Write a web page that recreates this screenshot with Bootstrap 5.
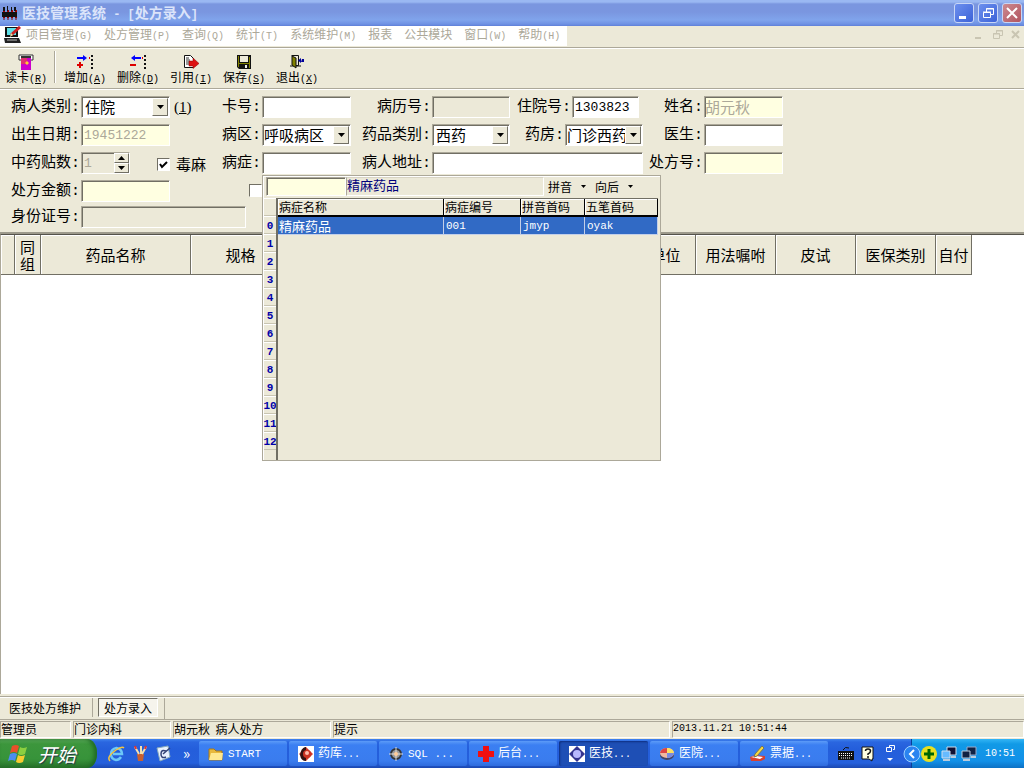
<!DOCTYPE html>
<html lang="zh-CN">
<head>
<meta charset="utf-8">
<meta name="viewport" content="width=device-width, initial-scale=1">
<title>医技管理系统 - [处方录入]</title>
<link href="https://cdn.jsdelivr.net/npm/bootstrap@5.3.0/dist/css/bootstrap.min.css" rel="stylesheet">
<style>
:root{--face:#ece9d8;--shade:#aca899;--dark:#716f64;--cream:#ffffe1;--cjk:"Noto Sans CJK SC",sans-serif}
body{font-family:var(--cjk);font-size:12px;line-height:16px;color:#000;background:var(--face);overflow:hidden}
button{font:inherit;color:inherit;padding:0;border:0;background:none}
a{color:inherit;text-decoration:none}
svg{display:block;flex:none}
.lat{font-family:"Liberation Mono",monospace;font-size:10px}
.lat-md{font-family:"Liberation Mono",monospace;font-size:11px}
/* title bar */
.titlebar{height:26px;padding:0 2px;background:linear-gradient(#9ab8f2 0,#9ab8f2 2px,#7a96df 4px,#7a96e0 12px,#80a4ec 20px,#6f92e4 24px,#5f7fd8 26px);color:#dbe4fa}
.titlebar h1{font-size:14px;line-height:24px;font-weight:700}
.titlebar h1 .lat-t{font-family:"Liberation Mono",monospace;font-size:12px}
.winbtn{width:20px;height:20px;border:1px solid #c8d6f6;border-radius:3px;background:linear-gradient(135deg,#6d90ee,#3c62d8)}
.winbtn-x{background:linear-gradient(135deg,#cc8a90,#b25560)}
/* menu */
.menubar{height:20px;color:#aca899}
.menubar nav{background:#fff;padding:0 7px 0 4px;gap:12px}
.menubar nav a{line-height:16px}
.tool{height:42px;border-top:1px solid var(--shade);border-bottom:1px solid var(--shade);box-shadow:inset 0 1px #fff,0 1px #fff;margin-top:1px;padding:4px 4px 0 5px;gap:11px}
.tool button{width:42px;line-height:14px;text-align:center;white-space:nowrap}
.tool button svg{margin:0 auto}
.tool .sep{width:2px;height:32px;border-left:1px solid var(--shade);border-right:1px solid #fff;margin:-1px -3px 0 -4px}
/* form */
.rx-form{display:grid;grid-template-columns:81px 89px 92px 89px 81px 78px 133px 61px 79px;grid-template-rows:28px 28px 28px 26px 25px;padding:6px 0 1px;border-bottom:2px solid #9d9a8c;align-items:start;font-size:15px;line-height:22px;margin-top:1px}
.rx-form .lb{font-family:"Liberation Mono","Noto Sans CJK SC",sans-serif;font-size:15px;line-height:24px;text-align:right;padding-right:1px;white-space:nowrap}
.inp{display:block;height:22px;width:100%;min-width:0;border:1px solid;border-color:var(--shade) #fff #fff var(--shade);box-shadow:inset 1px 1px var(--dark);background:#fff;border-radius:0;padding:0 0 0 2px;font-family:"Liberation Mono","Noto Sans CJK SC",sans-serif;font-size:13px;line-height:18px;outline:0;color:#000}
.inp.cr{background:var(--cream)} .inp.gy{background:var(--face)}
.inp:disabled{color:#aca899;opacity:1}
.inp.han{font-size:15px;padding-left:0}
.combo{height:22px;display:flex;border:1px solid;border-color:var(--shade) #fff #fff var(--shade);box-shadow:inset 1px 1px var(--dark);background:#fff;padding:1px}
.combo select{appearance:none;flex:1;min-width:0;border:0;background:transparent;padding:0 0 0 2px;font:15px/18px var(--cjk);outline:0;color:#000;overflow:hidden}
.raised{background:var(--face);border:1px solid;border-color:#fff var(--dark) var(--dark) #fff;display:flex;align-items:center;justify-content:center}
.combo .raised{width:16px;pointer-events:none}
.spin{width:17px;padding:1px}
.chk{appearance:none;width:13px;height:13px;background:#fff;border:1px solid;border-color:var(--dark) #fff #fff var(--dark);margin:0;display:block;flex:none}
.tick{pointer-events:none;margin-left:-11px}
/* lookup */
.lookup{position:absolute;left:0;top:23px;z-index:5;width:399px;background:var(--face);border:1px solid var(--shade);box-shadow:inset 1px 1px #fff;font-size:12px;line-height:16px;padding:1px 2px 0 1px}
.lookup .find{width:80px;height:19px;background:var(--cream);margin-left:2px}
.lookup .hit{width:198px;height:19px;border:1px solid;border-color:#d8d4c4 #fff #fff var(--shade);color:#00007b;font-size:13px;line-height:13px}
.nums{width:12px;color:#0000a8;font-weight:700}
.nums div{height:18px;border-bottom:1px solid #c9c5b2;box-shadow:inset 0 1px #fff;line-height:20px;display:flex;justify-content:center}
.hits{height:262px;flex:1;border-left:2px solid var(--dark);border-top:1px solid var(--dark)}
.hits table{table-layout:fixed;width:100%;border-collapse:separate;border-spacing:0}
.hits th{font-weight:400;height:18px;line-height:16px;padding:0 0 0 1px;border-right:1px solid #000;border-bottom:2px solid #000;box-shadow:inset 1px 1px #fff;white-space:nowrap}
.hits td{background:#316ac5;color:#fff;height:18px;line-height:16px;padding:0 0 0 2px;border-right:1px solid #c3cfe8;border-bottom:1px solid #c3cfe8}
.hits td:first-child{font-size:13px;padding-left:1px}
/* drug table */
.sheet{background:#fff;border-left:1px solid var(--shade);border-top:1px solid #55534b;min-height:0}
.sheet table{table-layout:fixed;border-collapse:separate;border-spacing:0;width:971px}
.sheet th{height:40px;background:var(--face);border-right:1px solid var(--dark);border-bottom:1px solid var(--dark);box-shadow:inset 1px 1px #fff;font-size:15px;line-height:17px;font-weight:400;text-align:center;padding:0;white-space:nowrap}
/* window tabs + status */
.wtabs{height:24px;border-top:1px solid var(--shade);border-bottom:1px solid var(--shade);box-shadow:inset 0 1px #fff;margin-top:2px;padding:1px 3px 0}
.wtabs button{height:19px;line-height:16px;padding:0 11px 0 6px;border-right:1px solid var(--shade)}
.wtabs .on{border:1px solid;border-color:var(--dark) #fff #fff var(--dark);background:#f6f4ec;padding:0 5px;margin-left:5px}
.wtabs .edge{width:7px;border-right:1px solid var(--shade)}
.stat{height:19px;gap:2px;padding:1px 0}
.stat div{border:1px solid;border-color:var(--shade) #fff #fff var(--shade);line-height:13px;white-space:nowrap}
/* taskbar */
.taskbar{height:29px;background:linear-gradient(#3f83ee 0,#2a66e0 3px,#245edb 10px,#2560dc 24px,#1c48b0 29px);color:#fff}
.start{width:97px;height:29px;background:linear-gradient(#5fae5e 0,#3c963c 5px,#37933a 20px,#27712a 29px);border-radius:0 10px 10px 0/0 14px 14px 0;box-shadow:inset -3px 0 4px #1f6a24;font-size:19px;font-style:italic;line-height:26px;text-shadow:1px 1px 1px #234}
.task{flex:1 1 0;min-width:0;height:25px;border-radius:2px;background:linear-gradient(#5c9bf8,#3b7ff2 4px,#3a7cee 20px,#2f6bdd);padding-left:9px;gap:4px;text-align:left;white-space:nowrap}
.task.on{background:#1e4fb5;box-shadow:inset 1px 1px 2px #0e2f80}
.tray{width:113px;background:linear-gradient(#33b5f5 0,#119ae6 5px,#1290e8 22px,#0d71c4 29px);border-left:1px solid #0a3f97}
</style>
</head>
<body class="vh-100 d-flex flex-column">

<header class="titlebar d-flex align-items-center">
  <svg width="16" height="16" viewBox="0 0 16 16"><path d="M1 5h2v8H1zM5 5h2v8H5zM9 5h2v8H9zM13 5h2v8h-2z" fill="#a00"/><path d="M0 7h4v5H0zM4 7h4v5H4zM8 7h4v5H8zM12 7h3v5h-3z" fill="#111"/><path d="M1 2h2v4H1zM5 1h1v5H5zM9 2h1v4H9zM12 2h2v4h-2z" fill="#111"/><path d="M2 12v3M6 12v3M10 12v3M14 12v3" stroke="#700"/></svg>
  <h1 class="m-0 ms-1">医技管理系统<span class="lat-t"> - [</span>处方录入<span class="lat-t">]</span></h1>
  <div class="ms-auto d-flex gap-1">
    <button class="winbtn" aria-label="最小化"><svg width="18" height="18"><path d="M4 12h7v3H4z" fill="#fff"/></svg></button>
    <button class="winbtn" aria-label="还原"><svg width="18" height="18" fill="none" stroke="#fff"><path d="M7.500 8V4.500h7v6H12M7 5h8M4 8h8"/><path d="M4.500 8.500h7v5h-7z"/></svg></button>
    <button class="winbtn winbtn-x" aria-label="关闭"><svg width="18" height="18"><path d="M4 4l10 10M14 4L4 14" stroke="#fff" stroke-width="2"/></svg></button>
  </div>
</header>

<div class="menubar d-flex">
  <nav class="d-flex">
    <svg width="18" height="18" viewBox="0 0 18 18" style="margin-right:-8px"><path d="M1 1h13v10H1z" fill="#111"/><path d="M3 2h9v7H3z" fill="#5de0e8"/><path d="M0 12h15l2 5H1z" fill="#222"/><path d="M3 14h10" stroke="#bbb"/><path d="M16 1L7 9" stroke="#c22" stroke-width="3"/><path d="M7 7l-1 4 3-2" fill="#e8e0a0"/></svg>
    <a href="#">项目管理<span class="lat">(G)</span></a>
    <a href="#">处方管理<span class="lat">(P)</span></a>
    <a href="#">查询<span class="lat">(Q)</span></a>
    <a href="#">统计<span class="lat">(T)</span></a>
    <a href="#">系统维护<span class="lat">(M)</span></a>
    <a href="#">报表</a>
    <a href="#">公共模块</a>
    <a href="#">窗口<span class="lat">(W)</span></a>
    <a href="#">帮助<span class="lat">(H)</span></a>
  </nav>
  <svg class="ms-auto me-1" width="48" height="18" fill="none" stroke="#c9c5b2"><path d="M3 12h6" stroke-width="2"/><path d="M24.500 7V4.500h6v5H28M21.500 7.500h6v5h-6zM21 8h7M24 5h7"/><path d="M40 5l7 7M47 5l-7 7" stroke-width="2"/></svg>
</div>

<div class="tool d-flex" role="toolbar">
  <button><svg width="16" height="16" viewBox="0 0 16 16"><path d="M1 1h14v5H1z" fill="#fff" stroke="#333"/><path d="M3 3h10" stroke="#333" stroke-width="2"/><path d="M3 4h10v12H3z" fill="#c0c"/><path d="M3 4h6v6H3z" fill="#e03070"/><path d="M9 7l2 2-2 2-2-2z" fill="#fc3"/></svg>读卡<span class="lat">(<u>R</u>)</span></button>
  <span class="sep"></span>
  <button><svg width="16" height="16" viewBox="0 0 16 16"><path d="M0 4h7" stroke="#00f" stroke-width="2"/><path d="M6 1l4 3-4 3z" fill="#00f"/><path d="M3 8v6M0 11h6" stroke="#d00" stroke-width="2"/><path d="M15 1v14" stroke="#111" stroke-width="2" stroke-dasharray="2 2"/><path d="M12 4h1" stroke="#d00" stroke-width="2"/></svg>增加<span class="lat">(<u>A</u>)</span></button>
  <button><svg width="16" height="16" viewBox="0 0 16 16"><path d="M3 4h8" stroke="#00f" stroke-width="2"/><path d="M5 1v6L1 4z" fill="#00f"/><path d="M0 11h6" stroke="#d00" stroke-width="2"/><path d="M15 1v14" stroke="#111" stroke-width="2" stroke-dasharray="2 2"/><path d="M12 4h1" stroke="#d00" stroke-width="2"/></svg>删除<span class="lat">(<u>D</u>)</span></button>
  <button><svg width="16" height="16" viewBox="0 0 16 16"><path d="M1.500 1.500h6l3 3v9h-9z" fill="#fff" stroke="#111"/><path d="M3 4h3M3 6h4M3 8h3M3 10h3" stroke="#333"/><path d="M6 7h4V4l6 5.500-6 5V12H6z" fill="#d11" stroke="#800" stroke-width=".5"/></svg>引用<span class="lat">(<u>I</u>)</span></button>
  <button><svg width="16" height="16" viewBox="0 0 16 16"><path d="M1 1h14v14H3l-2-2z" fill="#111"/><path d="M2 2h1v11H2zM13 3h1v11h-1zM3 9h10v1H3z" fill="#808000"/><path d="M4 2h8v6H4z" fill="#ece9d8"/><path d="M9 11h2v3H9z" fill="#eee"/></svg>保存<span class="lat">(<u>S</u>)</span></button>
  <button><svg width="16" height="16" viewBox="0 0 16 16"><path d="M2.500 1.500h7v10h-3M1 12h11" fill="none" stroke="#111"/><path d="M3 2l4 2v10l-4-3z" fill="#808000" stroke="#111"/><path d="M12 4v5L9 6.500z" fill="#009"/><path d="M13 5h2v3h-3z" fill="#009"/></svg>退出<span class="lat">(<u>X</u>)</span></button>
</div>

<form class="rx-form">
  <label class="lb" for="kind">病人类别:</label>
  <div class="combo"><select id="kind"><option>住院</option></select><span class="raised"><svg width="7" height="4"><path d="M0 0h7L3.500 4z"/></svg></span></div>
  <div class="d-flex"><span class="ps-1" style="font-family:'Liberation Serif',serif">(<u>1</u>)</span><label class="lb flex-grow-1" for="card">卡号:</label></div>
  <input class="inp" id="card">
  <label class="lb" for="hist">病历号:</label>
  <input class="inp gy" id="hist" disabled>
  <div class="d-flex"><label class="lb flex-grow-1" for="inno">住院号:</label><div style="width:71px" class="pe-1"><input class="inp" id="inno" value="1303823"></div></div>
  <label class="lb" for="pname">姓名:</label>
  <input class="inp cr han" id="pname" value="胡元秋" disabled>

  <label class="lb" for="birth">出生日期:</label>
  <input class="inp cr" id="birth" value="19451222" disabled>
  <label class="lb" for="ward">病区:</label>
  <div class="combo"><select id="ward" class="p-0"><option>呼吸病区</option></select><span class="raised"><svg width="7" height="4"><path d="M0 0h7L3.500 4z"/></svg></span></div>
  <label class="lb" for="dtype">药品类别:</label>
  <div class="combo"><select id="dtype"><option>西药</option></select><span class="raised"><svg width="7" height="4"><path d="M0 0h7L3.500 4z"/></svg></span></div>
  <div class="d-flex"><label class="lb flex-grow-1" for="pharm">药房:</label><div class="combo" style="width:78px"><select id="pharm" class="p-0"><option>门诊西药房</option></select><span class="raised"><svg width="7" height="4"><path d="M0 0h7L3.500 4z"/></svg></span></div></div>
  <label class="lb" for="doc">医生:</label>
  <input class="inp" id="doc">

  <label class="lb" for="doses">中药贴数:</label>
  <div class="position-relative" style="width:49px"><input class="inp gy" id="doses" value="1" disabled>
    <div class="spin position-absolute top-0 end-0 h-100 d-flex flex-column"><span class="raised flex-fill"><svg width="7" height="4"><path d="M0 4h7L3.500 0z"/></svg></span><span class="raised flex-fill"><svg width="7" height="4"><path d="M0 0h7L3.500 4z"/></svg></span></div></div>
  <div class="d-flex align-items-center" style="margin-left:-13px"><input type="checkbox" class="chk" id="nar" checked><svg class="tick" width="9" height="9"><path d="M1 4l2 3 5-5" fill="none" stroke="#000" stroke-width="2"/></svg><label for="nar" class="ps-2">毒麻</label><label class="lb flex-grow-1" for="dis">病症:</label></div>
  <div class="position-relative"><input class="inp" id="dis">
    <div class="lookup">
      <div class="d-flex align-items-start" style="height:21px">
        <input class="inp find" aria-label="检索" autofocus>
        <div class="hit">精麻药品</div>
        <button type="button" class="d-flex align-items-center ms-1" style="line-height:20px">拼音<svg class="ms-2 me-2" width="7" height="4"><path d="M1 0h5L3.500 3z"/></svg></button>
        <button type="button" class="d-flex align-items-center" style="line-height:20px">向后<svg class="ms-2" width="7" height="4"><path d="M1 0h5L3.500 3z"/></svg></button>
      </div>
      <div class="d-flex">
        <div class="nums lat-md"><div></div><div>0</div><div>1</div><div>2</div><div>3</div><div>4</div><div>5</div><div>6</div><div>7</div><div>8</div><div>9</div><div>10</div><div>11</div><div>12</div></div>
        <div class="hits"><table>
          <colgroup><col><col style="width:77px"><col style="width:64px"><col style="width:73px"></colgroup>
          <thead><tr><th>病症名称</th><th>病症编号</th><th>拼音首码</th><th>五笔首码</th></tr></thead>
          <tbody><tr><td>精麻药品</td><td class="lat-md">001</td><td class="lat-md">jmyp</td><td class="lat-md">oyak</td></tr></tbody>
        </table></div>
      </div>
    </div>
  </div>
  <label class="lb" for="addr">病人地址:</label>
  <input class="inp" id="addr" style="grid-column:span 2">
  <label class="lb" for="rxno">处方号:</label>
  <input class="inp cr" id="rxno" disabled>

  <label class="lb" for="sum">处方金额:</label>
  <input class="inp cr" id="sum" disabled>
  <div class="d-flex justify-content-end pt-1"><input type="checkbox" class="chk" aria-label="选择"></div>
  <label class="lb" for="idno" style="grid-column:1;grid-row:5">身份证号:</label>
  <div style="grid-column:2/4;grid-row:5" class="pe-3"><input class="inp gy" id="idno" disabled></div>
</form>

<main class="sheet flex-grow-1">
  <table>
    <colgroup><col style="width:14px"><col style="width:26px"><col style="width:150px"><col style="width:100px"><col><col style="width:60px"><col style="width:80px"><col style="width:80px"><col style="width:80px"><col style="width:36px"></colgroup>
    <thead><tr><th></th><th>同<br>组</th><th>药品名称</th><th>规格</th><th></th><th>单位</th><th>用法嘱咐</th><th>皮试</th><th>医保类别</th><th>自付</th></tr></thead>
  </table>
</main>

<div class="wtabs d-flex"><button>医技处方维护</button><button class="on">处方录入</button><span class="edge"></span></div>
<footer class="stat d-flex">
  <div style="width:71px">管理员</div><div style="width:98px">门诊内科</div><div style="width:158px">胡元秋&nbsp; 病人处方</div><div class="flex-grow-1">提示</div><div class="lat" style="width:352px">2013.11.21 10:51:44</div>
</footer>

<div class="taskbar d-flex align-items-center">
  <button class="start d-flex align-items-center ps-2"><svg width="22" height="20" viewBox="0 0 22 20"><path d="M4 2q4-2 7 0L9 9q-3-2-7 0z" fill="#e8502a"/><path d="M12 3q3 2 7 0l-2 7q-4 2-7 0z" fill="#8ccf40"/><path d="M2 10q4-2 7 0l-2 7q-3-2-7 0z" fill="#4d8df0"/><path d="M10 11q3 2 7 0l-2 7q-4 2-7 0z" fill="#f8cc30"/></svg><span class="ps-2">开始</span></button>
  <div class="d-flex align-items-center" style="width:102px;padding-left:11px;gap:7px">
    <svg width="17" height="17" viewBox="0 0 17 17"><path d="M13 12Q11 15 8 15 3 14 3 9t5.500-6Q14 4 14 9H5" fill="none" stroke="#6cc8f8" stroke-width="2.500"/><path d="M2 16Q-2 12 8 5 14 1 16 3" fill="none" stroke="#f4c440" stroke-width="1.500"/></svg>
    <svg width="16" height="17" viewBox="0 0 16 17"><path d="M5 9h7l-1 7H6z" fill="#c86030"/><path d="M7 9L3 2M9 9V1M10 9l4-7" stroke="#f4e0b0" stroke-width="2"/><path d="M4 4L3 1M13 4l1-3" stroke="#d33" stroke-width="2"/></svg>
    <svg width="17" height="17" viewBox="0 0 17 17"><path d="M2 3l11-2 2 11-10 4z" fill="#e8f2ff" stroke="#8ab"/><path d="M11 6Q6 4 6 9t5 3M8 9l7-6" fill="none" stroke="#347" stroke-width="1.500"/></svg>
    <span class="align-self-start ps-1" style="font-size:15px;line-height:16px">»</span>
  </div>
  <div class="d-flex flex-grow-1" style="gap:2px">
    <button class="task d-flex align-items-center"><svg width="16" height="16"><path d="M1 3h5l2 2h6v9H1z" fill="#e8b83c" stroke="#a87818"/><path d="M3 7h12l-1 7H1z" fill="#ffe890"/></svg><span class="lat-md">START</span></button>
    <button class="task d-flex align-items-center"><svg width="16" height="16"><path d="M0 0h16v16H0z" fill="#fff"/><path d="M8 1l7 7-7 7-7-7z" fill="#d43a2a"/><path d="M3 5q2-4 5-4v14q-5 0-6-6z" fill="#311"/><circle cx="9" cy="8" r="4" fill="#c32"/><circle cx="9" cy="7" r="2" fill="#fba"/></svg><span>药库<span class="lat">...</span></span></button>
    <button class="task d-flex align-items-center"><svg width="16" height="16"><circle cx="8" cy="8" r="5" fill="#999" stroke="#333" stroke-width="2"/><path d="M8 1v14M1 8h14" stroke="#ddd"/><circle cx="8" cy="8" r="2" fill="#fc9"/></svg><span class="lat-md">SQL ...</span></button>
    <button class="task d-flex align-items-center"><svg width="16" height="16"><path d="M5 0h6v5h5v6h-5v5H5v-5H0V5h5z" fill="#f01010"/></svg><span>后台<span class="lat">...</span></span></button>
    <button class="task on d-flex align-items-center" style="padding-left:10px"><svg width="16" height="16"><path d="M0 0h16v16H0z" fill="#fff"/><path d="M8 0l8 8-8 8-8-8z" fill="#33338f"/><circle cx="8" cy="8" r="4" fill="#b8b8ff"/></svg><span>医技<span class="lat">...</span></span></button>
    <button class="task d-flex align-items-center"><svg width="16" height="16"><ellipse cx="8" cy="9" rx="7" ry="5" fill="#446"/><ellipse cx="8" cy="7" rx="7" ry="5" fill="#f0b8a0"/><path d="M8 7V2q6 0 7 5z" fill="#fce060"/><path d="M8 7h7q-1 5-7 5z" fill="#7a8ae0"/><path d="M8 7H1q1-5 7-5z" fill="#d44"/></svg><span>医院<span class="lat">...</span></span></button>
    <button class="task d-flex align-items-center"><svg width="17" height="16"><path d="M1 11l5-2 10 1v3l-4 2H2z" fill="#d84030"/><path d="M2 11l5-1 7 1-3 2z" fill="#fff"/><path d="M13 0l2 2-7 8-3 1 1-3z" fill="#f8d840" stroke="#775"/></svg><span>票据<span class="lat">...</span></span></button>
  </div>
  <div class="d-flex align-items-center" style="width:83px;padding-left:10px;gap:7px">
    <svg width="16" height="16"><path d="M0 5h16v9H0z" fill="#111"/><path d="M1 7.500h14M1 9.500h14M3 12h10" stroke="#fff" stroke-dasharray="1 1"/><path d="M5 4q2-4 6-2" stroke="#111" fill="none"/></svg>
    <svg width="14" height="16"><path d="M1 1h11v12h-1v2l-3-2H1z" fill="#ffffe1" stroke="#111"/><path d="M4.500 5q0-2 2.500-2t2.500 2q0 2-2.500 3v1M6 11h2" fill="none" stroke="#111" stroke-width="1.500"/></svg>
    <svg class="ms-1" width="9" height="20" fill="none" stroke="#fff"><path d="M3.500 3V1.500h5v4H7M.5 3.500h5v4h-5z"/><path d="M1 14h6L4 17z" fill="#fff" stroke="none"/></svg>
  </div>
  <div class="tray h-100 d-flex align-items-center">
    <svg style="margin-left:-9px" width="18" height="18"><circle cx="9" cy="9" r="8" fill="#2a84f0" stroke="#9ccfff"/><path d="M11 5L7 9l4 4" fill="none" stroke="#fff" stroke-width="2"/></svg>
    <svg width="16" height="16"><circle cx="8" cy="8" r="8" fill="#e8e020"/><path d="M8 3v10M3 8h10" stroke="#060" stroke-width="3"/></svg>
    <svg class="ms-1" width="16" height="16"><path d="M6 1h9v8H6z" fill="#113" stroke="#cde"/><path d="M1 5h8v7H1z" fill="#6bf" stroke="#cde"/><path d="M2 14h7M10 11h5" stroke="#bcd" stroke-width="2"/></svg>
    <svg class="ms-1" width="16" height="16"><path d="M6 1h9v8H6z" fill="#124" stroke="#9ac"/><path d="M1 5h8v7H1z" fill="#124" stroke="#bcd"/><path d="M2 14h7M10 11h5" stroke="#bcd" stroke-width="2"/></svg>
    <span class="lat ms-2">10:51</span>
  </div>
</div>
<script src="https://cdn.jsdelivr.net/npm/bootstrap@5.3.0/dist/js/bootstrap.bundle.min.js"></script>
</body>
</html>
